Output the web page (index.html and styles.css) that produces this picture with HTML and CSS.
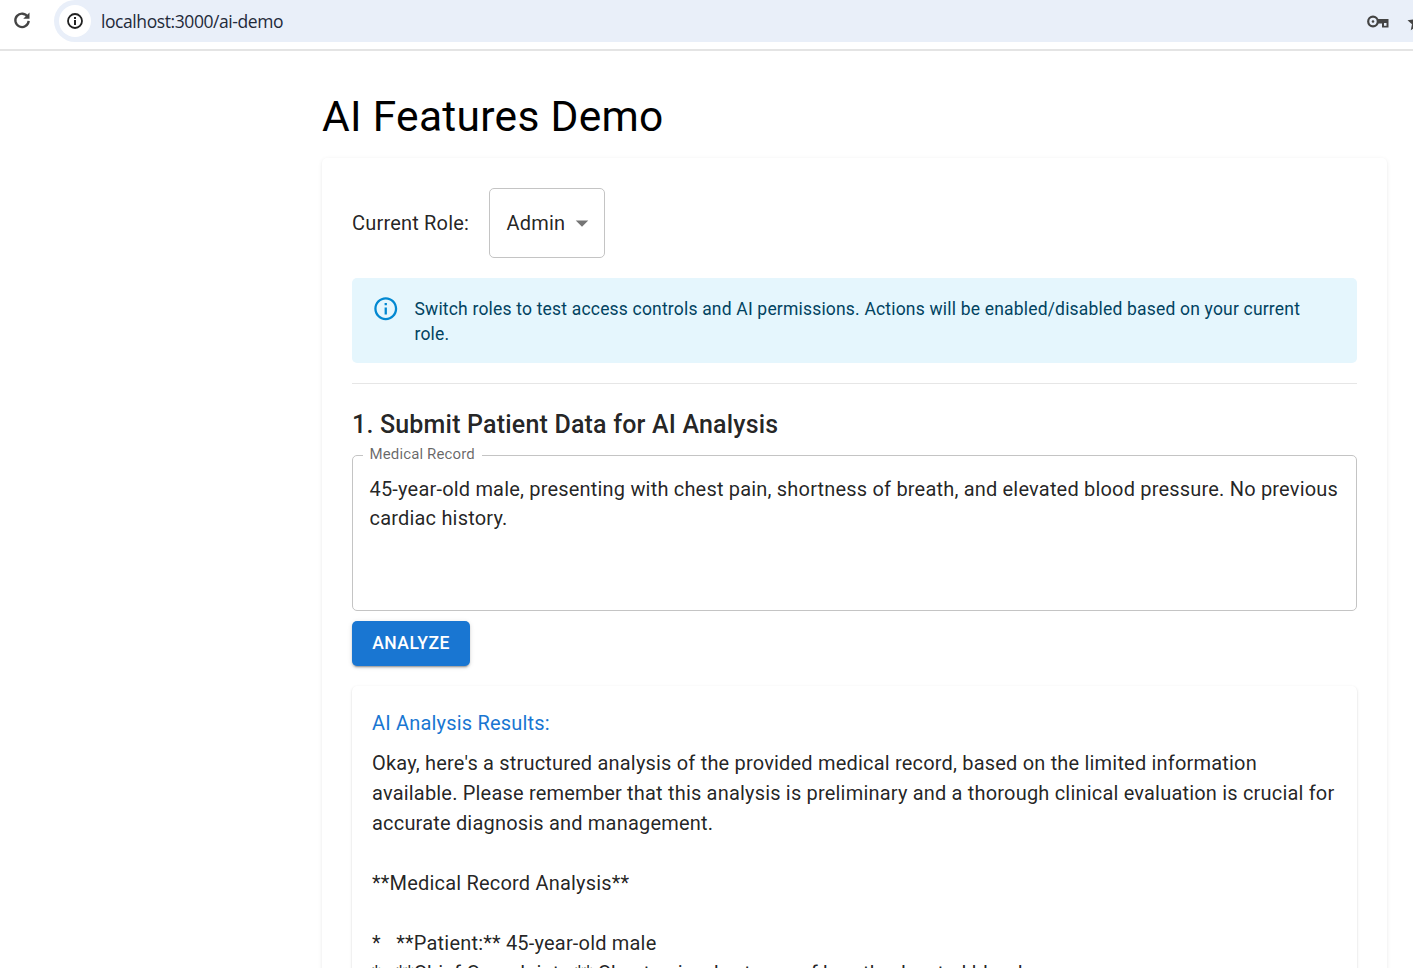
FILE: index.html
```html
<!DOCTYPE html>
<html lang="en">
<head>
<meta charset="utf-8">
<title>AI Features Demo</title>
<link rel="stylesheet" href="styles.css">
</head>
<body>
<header class="chrome">
  <div class="toolbar">
    <svg class="reload" width="20" height="20" viewBox="0 0 24 24"><path d="M19 8.500A8 8 0 1 0 20 13" fill="none" stroke="#444" stroke-width="2.800"/><path d="M21 3v7.500h-7.500z" fill="#444"/></svg>
    <div class="omnibox">
      <span class="site-chip"><svg width="18" height="18" viewBox="0 0 18 18"><circle cx="9" cy="9" r="7" fill="none" stroke="#222" stroke-width="1.800"/><rect x="8" y="8" width="2" height="5" fill="#222"/><rect x="8" y="5" width="2" height="2" fill="#222"/></svg></span>
      <span class="url">localhost:3000/ai-demo</span>
      <span class="omni-icons">
        <svg class="key" width="22" height="13" viewBox="0 0 22 13"><circle cx="6" cy="6.500" r="4.800" fill="none" stroke="#444" stroke-width="2.200"/><circle cx="6" cy="6.500" r="1.300" fill="#444"/><path d="M10.500 4h11v8.500h-6.500v-4h-4.500z" fill="#444"/><rect x="17" y="8" width="2.500" height="2.800" fill="#e9eff9"/></svg>
        <svg class="star" width="20" height="20" viewBox="0 0 16 16"><path d="M8 1.500l2 4.500 4.800.5-3.600 3.200 1 4.800L8 12.100 3.800 14.500l1-4.800L1.200 6.500 6 6z" fill="#444"/></svg>
      </span>
    </div>
  </div>
</header>
<main class="page">
  <h1 class="title">AI Features Demo</h1>
  <section class="card">
    <div class="role-row">
      <span class="role-label">Current Role:</span>
      <div class="select"><span>Admin</span><svg width="30" height="30" viewBox="0 0 24 24"><path d="M7 10l5 5 5-5z" fill="#757575"/></svg></div>
    </div>
    <div class="alert">
      <svg class="alert-icon" width="27.500" height="27.500" viewBox="0 0 24 24"><path d="M11 7h2v2h-2zm0 4h2v6h-2zm1-9C6.480 2 2 6.480 2 12s4.480 10 10 10 10-4.480 10-10S17.520 2 12 2zm0 18c-4.410 0-8-3.590-8-8s3.590-8 8-8 8 3.590 8 8-3.590 8-8 8z" fill="#0288d1"/></svg>
      <p class="alert-text">Switch roles to test access controls and AI permissions. Actions will be enabled/disabled based on your current role.</p>
    </div>
    <hr class="divider">
    <h2 class="section-title">1. Submit Patient Data for AI Analysis</h2>
    <fieldset class="field">
      <legend class="field-label">Medical Record</legend>
      <p class="field-value">45-year-old male, presenting with chest pain, shortness of breath, and elevated blood pressure. No previous cardiac history.</p>
    </fieldset>
    <button class="analyze" type="button">Analyze</button>
    <article class="results">
      <h3 class="results-title">AI Analysis Results:</h3>
      <pre class="results-body">Okay, here's a structured analysis of the provided medical record, based on the limited information
available. Please remember that this analysis is preliminary and a thorough clinical evaluation is crucial for
accurate diagnosis and management.

**Medical Record Analysis**

*   **Patient:** 45-year-old male
*   **Chief Complaints:** Chest pain, shortness of breath, elevated blood pressure</pre>
    </article>
  </section>
</main>
</body>
</html>
```
FILE: styles.css
```css
* { box-sizing: border-box; }
html, body { margin: 0; height: 968px; overflow: hidden; background: #fff; }
body { font-family: Roboto, "Liberation Sans", sans-serif; color: rgba(0,0,0,.87); letter-spacing: .1875px; }

.chrome { height: 51px; border-bottom: 2px solid #e4e4e4; background: #fff; }
.toolbar { display: flex; align-items: flex-start; height: 42px; padding-left: 12px; }
.reload { margin-top: 10px; }
.omnibox { flex: 1; height: 42px; margin-left: 22px; display: flex; align-items: center; padding-left: 5px; background: #e9eff9; border-radius: 21px 0 0 21px; overflow: hidden; }
.site-chip { width: 32px; height: 32px; border-radius: 50%; background: #fff; display: flex; align-items: center; justify-content: center; }
.url { margin-left: 10px; font: 17.500px "Open Sans", Roboto, sans-serif; letter-spacing: -.42px; color: #1f2a3a; }
.omni-icons { margin-left: auto; display: flex; align-items: center; gap: 16.500px; margin-right: -12.500px; }
.key { margin-top: 1px; }
.star { flex: none; margin-top: 2px; }

.page { padding: 0 26px 0 322px; }
.title { margin: 0; height: 107px; padding-top: 40px; font-size: 42.500px; line-height: 52px; font-weight: 400; letter-spacing: .3px; color: #000; }
.card { padding: 30px; height: 900px; background: #fff; border-radius: 5px; box-shadow: 0 2px 1px -1px rgba(0,0,0,.1), 0 1px 1px 0 rgba(0,0,0,.07), 0 1px 4px 0 rgba(0,0,0,.08); }

.role-row { display: flex; align-items: center; gap: 20px; }
.role-label { font-size: 20px; line-height: 30px; }
.select { width: 116px; height: 70px; display: flex; align-items: center; padding-left: 16.500px; border: 1px solid #c4c4c4; border-radius: 5px; font-size: 20px; }
.select svg { margin-left: 1.500px; }

.alert { display: flex; gap: 15px; margin-top: 20px; height: 85px; padding: 19px 20px; background: #e5f6fd; border-radius: 5px; }
.alert-icon { flex: none; margin-top: -2px; }
.alert-text { margin: 0; font-size: 17.500px; line-height: 25px; color: #014361; }

.divider { margin: 20px 0 0; border: 0; border-top: 1px solid #e6e6e6; }

.section-title { margin: 26px 0 0; height: 38px; font-size: 25px; line-height: 30px; font-weight: 500; letter-spacing: .19px; }

.field { margin: 0; height: 163px; padding: 0 16.500px; border: 1px solid #c4c4c4; border-radius: 5px; }
.field-label { padding: 0 7px 2px; margin-left: -7px; font-size: 15px; line-height: 13px; letter-spacing: .13px; color: rgba(0,0,0,.6); }
.field-value { margin: 12px 0 0; font-size: 20px; line-height: 29px; }

.analyze { display: block; margin-top: 10px; width: 118px; height: 45px; padding: 0 0 2px; border: 0; border-radius: 5px; background: #1976d2; color: #fff; font: 500 17.500px Roboto, sans-serif; text-transform: uppercase; letter-spacing: .5px; box-shadow: 0 3px 1px -2px rgba(0,0,0,.2), 0 2px 2px 0 rgba(0,0,0,.14), 0 1px 5px 0 rgba(0,0,0,.12); }

.results { margin-top: 20px; padding: 20px; height: 400px; border-radius: 5px; background: #fff; box-shadow: 0 2px 1px -1px rgba(0,0,0,.2), 0 1px 1px 0 rgba(0,0,0,.14), 0 1px 3px 0 rgba(0,0,0,.12); }
.results-title { margin: 0; font-size: 20px; line-height: 35px; font-weight: 400; color: #1976d2; }
.results-body { margin: 7px 0 0; font: 20px/30px Roboto, sans-serif; white-space: pre-wrap; }
```
